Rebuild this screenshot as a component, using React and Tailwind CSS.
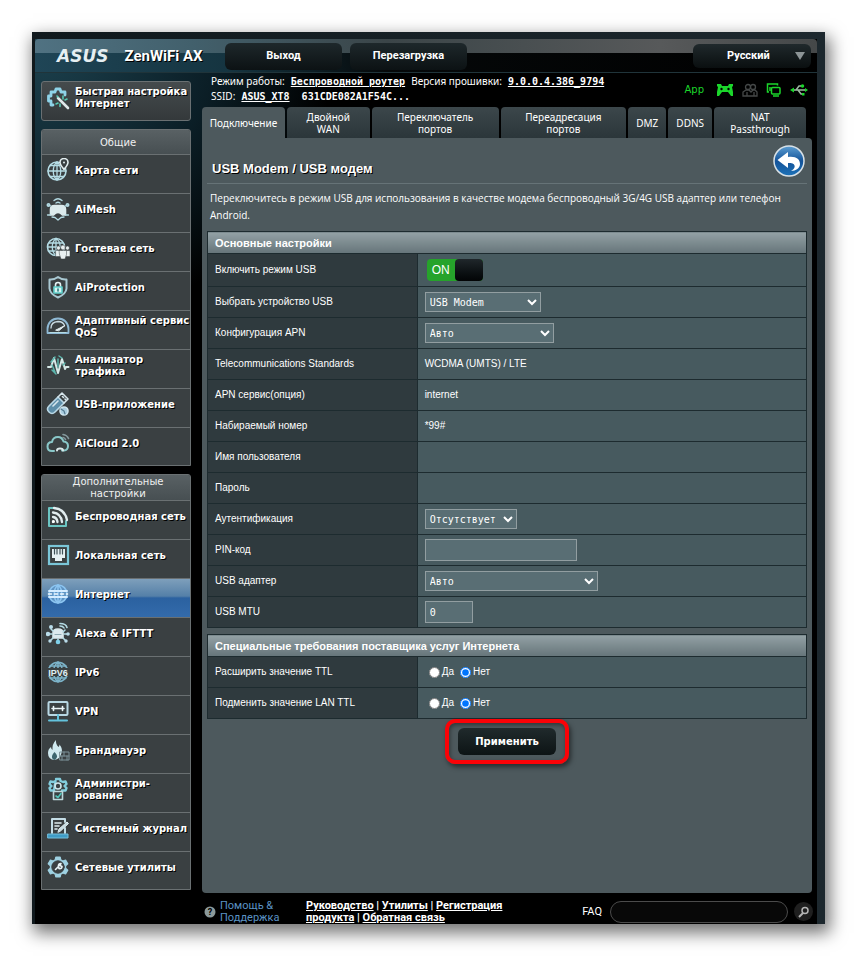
import React, { useState } from 'react';

// Icons
const Svg = ({ children, className = 'size-6' }) => (
  <svg viewBox="0 0 24 24" className={`${className} shrink-0`} fill="none" stroke="#b4dbe4" strokeWidth="1.6" strokeLinecap="round" strokeLinejoin="round" aria-hidden="true">
    {children}
  </svg>
);

const GEAR = 'M9.8 2h4.4l.6 2.9 2 1.1 2.8-1 2.2 3.8-2.2 2v2.4l2.2 2-2.2 3.8-2.8-1-2 1.1-.6 2.9H9.8l-.6-2.9-2-1.1-2.8 1-2.2-3.8 2.2-2v-2.4l-2.2-2L4.4 5l2.8 1 2-1.1z';

const icons = {
  setup: (
    <Svg>
      <path d="M7 19H5v-4H2.500v-5H5V6h4l1-3h4l1 3h4v3" stroke="#8ed3e8" strokeWidth="2.800" />
      <path d="M12 12l10 10" stroke="#dfe8ea" strokeWidth="2.600" />
      <path d="M17 10v3M21 13l-2 1M10 18l2-1M14 18v2.500M11 10l1 1" stroke="#57c9b4" />
    </Svg>
  ),
  map: (
    <Svg>
      <circle cx="11" cy="13" r="9" />
      <path d="M2 13h18M4 7.500h10M4 18.500h14M11 4c-5 4-5 14 0 18M11 4c5 4 5 14 0 18M11 4v18" strokeWidth="1.300" />
      <path d="M18 11.500c-3-4-4-5-4-7a4 4 0 0 1 8 0c0 2-1 3-4 7z" fill="#3a4042" stroke="#e2edef" />
      <circle cx="18" cy="4.500" r="1" fill="#e2edef" stroke="none" />
    </Svg>
  ),
  mesh: (
    <Svg>
      <path d="M4.500 18V12.500q0-4 4-4h7q4 0 4 4V18h-3q-4.500-5-9 0z" fill="#dcebed" stroke="#dcebed" />
      <path d="M8 3.500q4-3.500 8 0M10 6q2-1.500 4 0M2 8l3 1M22 8l-3 1M1.500 18h3M19.500 18h3M6 20l3 .5 3 2.500 3-2.500 3-.5" strokeWidth="1.300" />
      <circle cx="2.500" cy="8" r="1.200" />
      <circle cx="21.500" cy="8" r="1.200" />
    </Svg>
  ),
  guest: (
    <Svg>
      <circle cx="10" cy="11" r="8.500" />
      <path d="M2 11h13M3 7h14M3 15h9M10 2.500c-5 4-5 13 0 17M10 2.500c3 2 4 5 4 7M10 2.500v17" strokeWidth="1.300" />
      <g fill="#e8f0f1" stroke="#3a4042" strokeWidth=".5">
        <circle cx="12.500" cy="12" r="2" />
        <circle cx="21.500" cy="12" r="2" />
        <path d="M10 14.500h5v6h-5zM19 14.500h5v6h-5z" />
        <circle cx="17" cy="11.500" r="2.400" />
        <path d="M13.500 14.500h7v4l-1.500 4.500h-4l-1.500-4.500z" />
      </g>
    </Svg>
  ),
  protection: (
    <Svg>
      <path d="M12 2q4 3 8.500 2.500v9Q20 19 12 22.500 4 19 3.500 13.500v-9Q8 5 12 2z" stroke="#a9c9d3" strokeWidth="2" />
      <path d="M9.500 12v-2q0-2.500 2.500-2.500t2.500 2.500v2" stroke="#e4f3f4" />
      <path d="M8 12h8v6H8z" fill="#d7f5f3" stroke="#5fd0cb" />
      <path d="M12 14v2" stroke="#2d7a80" />
    </Svg>
  ),
  qos: (
    <Svg>
      <path d="M1.500 19v-4C1.500 9 6 4.500 12 4.500S22.500 9 22.500 15v4z" stroke="#8fb9d4" strokeWidth="1.800" />
      <path d="M5 14q0-6 7-6.500 5 0 6.500 4" stroke="#c9dbe3" strokeWidth="1.300" />
      <path d="M10 16l9-4.500-6 5z" fill="#e3eef1" stroke="#e3eef1" strokeWidth="1" />
      <path d="M4 18.500h16" strokeWidth="1" />
    </Svg>
  ),
  traffic: (
    <Svg>
      <path d="M2 14h3L8 5l4 15 4-14 3 10 1-2h2.500" stroke="#d5e8e7" strokeWidth="2" />
      <path d="M5 9l4-5M6 17l4 4M13 3l3 2M17 12l2-2M6 12l3 7M12 6v8" stroke="#5cb6ae" strokeWidth="1.500" />
    </Svg>
  ),
  usb: (
    <Svg>
      <path d="M3 14l9-9 6 6-9 9q-3 3-6 0t0-6z" fill="#5d8ea9" stroke="#b9d8e6" />
      <path d="M12 5l4-4 6 6-4 4M16.500 4.500l1 1M19 7l.5.500M7 14l5-5" stroke="#d7e6ec" />
      <circle cx="18" cy="19" r="4" fill="#a9cde0" stroke="#d0e5ee" />
      <path d="M15 17l3 2 1 3" stroke="#547b91" strokeWidth="1.200" />
    </Svg>
  ),
  cloud: (
    <Svg>
      <path d="M8 20H6q-4.500 0-4.500-4.500T6 11q1-5 6-5 4 0 5.500 4.500Q22 11 22 15t-4 4.500h-2" stroke="#8ac8c9" strokeWidth="2" />
      <path d="M11 19.500q0-2 3-2 3 0 3 2" stroke="#dbe9ea" strokeWidth="2" />
      <path d="M17 3.500q4 .5 5.500 4M17 6.500q2 .5 2.500 2" stroke="#84989d" />
    </Svg>
  ),
  wireless: (
    <Svg>
      <path d="M8 4H3v18h17v-5" stroke="#6bc4c2" strokeWidth="2" />
      <path d="M7 18v-.5M7 13q4 .5 4.500 5M7 8.500q8 1 9 9.500M8 4q11 1 13 12" stroke="#e1ecef" strokeWidth="2.300" />
      <circle cx="7.500" cy="17.500" r="1.500" fill="#fff" stroke="none" />
    </Svg>
  ),
  lan: (
    <Svg>
      <rect x="3" y="3" width="19" height="18" stroke="#7ac6d8" strokeWidth="2.200" strokeLinejoin="miter" />
      <path d="M6 6h13v9h-3v3H9v-3H6z" fill="#e5f0f3" stroke="none" />
      <path d="M8.500 6v5M11 6v5M14 6v5M16.500 6v5" stroke="#3e5158" strokeWidth="1.200" />
    </Svg>
  ),
  internet: (
    <Svg>
      <circle cx="12" cy="12" r="9" fill="#5e93c2" stroke="#8bc4f0" />
      <path d="M12 3c-5 4-5 14 0 18M12 3c5 4 5 14 0 18M12 3v18" stroke="#8bc4f0" />
      <path d="M3 9h18M3 15h18" stroke="#d4ecff" strokeWidth="2" />
      <path d="M2.500 12h19" stroke="#f4fbff" strokeDasharray="3 3" />
    </Svg>
  ),
  alexa: (
    <Svg>
      <path d="M7 17V12q0-4 5-4t5 4v5z" fill="#dce9ed" stroke="#dce9ed" />
      <path d="M3 13h3M18 13h4M12 18v3M5 8l2 2M19 9l-2 2M5 19l2-2M19 19l-2-2M14 2.500q6 0 7 4M14 5q3 0 4 2" />
      <g fill="#b9dcea" stroke="none">
        <circle cx="2" cy="13" r="2.200" />
        <circle cx="22" cy="13" r="1.800" />
        <circle cx="5" cy="6" r="2" />
        <circle cx="12" cy="21" r="2.300" fill="#7fd0ea" />
        <circle cx="4" cy="20" r="1.700" />
        <circle cx="20" cy="20" r="1.700" />
      </g>
      <path d="M9 13.500h6" stroke="#8fa9b2" strokeWidth="1.200" />
    </Svg>
  ),
  ipv6: (
    <Svg>
      <circle cx="12" cy="12" r="9.800" stroke="#7cb3c9" />
      <path d="M12 2v20M4 6h16M4 18h16M12 2c-6 5-6 15 0 20M12 2c6 5 6 15 0 20" stroke="#7cb3c9" />
      <rect x="1" y="8" width="22" height="8" fill="#3a4042" stroke="none" />
      <text x="12" y="15.500" textAnchor="middle" fontFamily="Liberation Sans, sans-serif" fontSize="9" fontWeight="bold" fill="#e0f0f5" stroke="none">IPV6</text>
    </Svg>
  ),
  vpn: (
    <Svg>
      <rect x="2.500" y="3" width="19" height="13" rx="1" stroke="#b8d7e3" strokeWidth="2" />
      <path d="M6 9.500h3.500M7.500 7.500v4M14.500 9.500H18M16.500 7.500v4M10.500 9.500h3" stroke="#e9f4f7" />
      <path d="M12 16v4M3 21.500h18" stroke="#63c2dc" strokeWidth="2" />
    </Svg>
  ),
  firewall: (
    <Svg>
      <path d="M8 22q-6-1-6-7 0-4 3-6 0 2 1.500 3Q6 6 10 2q-.5 4 2.500 7 1-1 1-2.500Q17 11 15.500 15q-1 6-7.500 7z" fill="#cfe9ef" stroke="none" />
      <path d="M8.500 22q-3-1-2.500-4 .5-2 2.500-4 3 3 2.500 5t-2.500 3z" fill="#3d666f" stroke="none" />
      <path d="M14 14h9v8h-9zM14 18h9M18 14v4M16 18v4M21 18v4" stroke="#7d9299" strokeWidth="1" />
    </Svg>
  ),
  admin: (
    <Svg>
      <path d="M10 2h4l.5 2L17 5l2.500-.5 1 2.500-2 2 2 2-1 2.500H16M8 13.500H4.500L3.500 11l2-2-2-2 1-2.500L7 5l2.500-1z" stroke="#83cddd" strokeWidth="2.400" />
      <circle cx="12" cy="9" r="3" stroke="#cfe6eb" />
      <rect x="7.500" y="14.500" width="9" height="8" stroke="#bcd8dc" />
      <path d="M10 19l2 1.500 3-4" stroke="#51c3b9" />
    </Svg>
  ),
  log: (
    <Svg>
      <path d="M6 17V3h13v3M19 12v5" stroke="#c4dde6" strokeWidth="2" />
      <path d="M9 7h6M9 10h4M9 13h2" stroke="#e0edf1" />
      <path d="M12 16l1-3 8-7 1.500 1.500-8 7.500z" fill="#c6dde4" stroke="#e0edf1" strokeWidth="1" />
      <path d="M2 18h20v4H2z" fill="#3f9cc6" stroke="#72bedb" strokeWidth="1" />
    </Svg>
  ),
  tools: (
    <Svg>
      <path d={GEAR} fill="#9ed1e2" stroke="#9ed1e2" strokeWidth="1.200" />
      <circle cx="12" cy="12" r="6.200" fill="#3a4042" stroke="#3a4042" strokeWidth="1" />
      <path d="M9.500 14.500l3-3m0 0q-.5-3 2.500-3l-1 2 2 1q0 2.500-3 2z" stroke="#e8f3f6" />
    </Svg>
  ),
};

const generalMenu = [
  { icon: 'map', label: 'Карта сети' },
  { icon: 'mesh', label: 'AiMesh' },
  { icon: 'guest', label: 'Гостевая сеть' },
  { icon: 'protection', label: 'AiProtection' },
  { icon: 'qos', label: 'Адаптивный сервис\nQoS' },
  { icon: 'traffic', label: 'Анализатор\nтрафика' },
  { icon: 'usb', label: 'USB-приложение' },
  { icon: 'cloud', label: 'AiCloud 2.0' },
];

const advancedMenu = [
  { icon: 'wireless', label: 'Беспроводная сеть' },
  { icon: 'lan', label: 'Локальная сеть' },
  { icon: 'internet', label: 'Интернет', active: true },
  { icon: 'alexa', label: 'Alexa & IFTTT' },
  { icon: 'ipv6', label: 'IPv6' },
  { icon: 'vpn', label: 'VPN' },
  { icon: 'firewall', label: 'Брандмауэр' },
  { icon: 'admin', label: 'Администри-\nрование' },
  { icon: 'log', label: 'Системный журнал' },
  { icon: 'tools', label: 'Сетевые утилиты' },
];

const tabs = [
  { label: 'Подключение', size: 'flex-[83_1_0]', active: true },
  { label: 'Двойной\nWAN', size: 'flex-[83_1_0]' },
  { label: 'Переключатель\nпортов', size: 'flex-[127_1_0]' },
  { label: 'Переадресация\nпортов', size: 'flex-[126_1_0]' },
  { label: 'DMZ', size: 'flex-[38_1_0]' },
  { label: 'DDNS', size: 'flex-[44_1_0]' },
  { label: 'NAT\nPassthrough', size: 'flex-[92_1_0]' },
];

const MenuGroup = ({ title, items }) => (
  <nav aria-label={title} className="mt-2 overflow-hidden rounded-t-[3px] border border-[#6a7072] bg-[#3a4042]">
    <h2 className="flex min-h-6 items-center justify-center bg-gradient-to-b from-[#596164] to-[#474f52] pt-px pr-5 pl-6 text-center text-[10px] leading-3 text-[#f0f0f0]">
      {title}
    </h2>
    <ul>
      {items.map((item) => (
        <li key={item.label} className="h-[39px] last:h-[38px]">
          <a
            href="#"
            className={`flex h-full gap-[5px] border-t border-[#6a7072] pl-1 ${
              item.active ? 'bg-[linear-gradient(#7e9fbb_0%,#5580a8_45%,#2b61a0_50%,#336bab_100%)]' : ''
            }`}
          >
            <span className="mt-[3px] flex">{icons[item.icon]}</span>
            <span className="flex h-8 items-center text-[10px] leading-3 font-bold whitespace-pre text-white [text-shadow:1px_1px_0_#000]">
              {item.label}
            </span>
          </a>
        </li>
      ))}
    </ul>
  </nav>
);

const Section = ({ title, children }) => (
  <table className="w-full border-collapse border border-[#1d2b2f] text-[10px] leading-3 text-white">
    <thead>
      <tr>
        <th colSpan={2} className="h-[22px] bg-gradient-to-b from-[#93a1a5] to-[#66757a] px-[7px] text-left text-[11px] font-black">
          {title}
        </th>
      </tr>
    </thead>
    <tbody>{children}</tbody>
  </table>
);

const Row = ({ label, id, tall, children }) => (
  <tr className={tall ? 'h-[33px]' : 'h-[31px]'}>
    <th className="w-[35%] border border-[#1d2b2f] bg-[#2f3a3e] p-0 pl-[7px] text-left font-normal">
      {id ? <label htmlFor={id}>{label}</label> : label}
    </th>
    <td className="border border-[#1d2b2f] bg-[#475a5f] p-0 pl-[7px]">{children}</td>
  </tr>
);

const Select = ({ id, options, width }) => (
  <select
    id={id}
    className={`block h-5 border border-[#929ea1] bg-[#596e74] font-['DejaVu_Sans_Mono',monospace] text-[10px] text-white ${width}`}
  >
    {options.map((option) => (
      <option key={option}>{option}</option>
    ))}
  </select>
);

const YesNo = ({ name, label }) => {
  const [value, setValue] = useState('Нет');
  return (
    <div role="radiogroup" aria-label={label} className="flex items-center gap-1.5 pl-1">
      {['Да', 'Нет'].map((option) => (
        <label key={option} className="flex items-center gap-0.5">
          <input
            type="radio"
            name={name}
            checked={value === option}
            onChange={() => setValue(option)}
            className="size-[11px]"
          />
          {option}
        </label>
      ))}
    </div>
  );
};

const HeaderButton = ({ children }) => (
  <button
    type="button"
    className="h-[27px] w-[117px] rounded-md bg-gradient-to-b from-[#1e282b] to-[#0c1214] font-['Roboto',sans-serif] text-[11px] font-bold text-white"
  >
    {children}
  </button>
);

const InfoLabel = ({ children }) => <span className="font-['Noto_Sans',sans-serif]">{children}</span>;

const InfoLink = ({ children }) => (
  <a href="#" className="font-bold underline">
    {children}
  </a>
);

const StatusIcons = () => (
  <div className="flex items-center gap-2 pt-2 text-[#1bd62b]">
    <span className="text-[10px]">App</span>
    <svg viewBox="0 0 18 14" className="ml-1 h-3.5 w-[18px]" fill="currentColor" aria-hidden="true">
      <path d="M1 1h4l1 2h6l1-2h4v2l-1 1 1 5v4h-2l-3-4H6l-3 4H1V9l1-5-1-1z" />
      <circle cx="5.500" cy="6" r="1.200" fill="#000" />
      <circle cx="12.500" cy="6" r="1.200" fill="#000" />
    </svg>
    <svg viewBox="0 0 16 14" className="h-3.5 w-4" fill="none" stroke="#454848" strokeWidth="1.300" aria-hidden="true">
      <circle cx="6" cy="4" r="2.500" />
      <circle cx="11" cy="4" r="2.500" />
      <path d="M1 13V9l3-2h3l2 2 2-2h2l2 2v4zM5 9v4M12 9v4" />
    </svg>
    <svg viewBox="0 0 16 14" className="h-3.5 w-4" fill="none" stroke="currentColor" strokeWidth="1.500" aria-hidden="true">
      <path d="M3 9H1.500V1h10v1.500M4 4v4" />
      <rect x="5.500" y="4.500" width="8.500" height="6.500" rx="1" />
      <path d="M7 13h6" />
    </svg>
    <svg viewBox="0 0 18 14" className="h-3.5 w-[18px]" fill="none" stroke="currentColor" strokeWidth="1.500" aria-hidden="true">
      <path d="M3 7h12M6 7l3-4h3M8 7l3 4h2" stroke="#9eb8a2" />
      <path d="M0 7l4-2.500v5zM18 7l-3-2v4z" fill="currentColor" stroke="none" />
      <circle cx="12.500" cy="3" r="1" fill="currentColor" />
      <rect x="12" y="10" width="2.500" height="2.500" fill="currentColor" stroke="none" />
    </svg>
  </div>
);

const App = () => {
  const [enabled, setEnabled] = useState(true);
  const [pin, setPin] = useState('');
  const [mtu, setMtu] = useState('0');

  return (
    <div className="bg-white p-8 font-['DejaVu_Sans',Verdana,sans-serif]">
      <div className="bg-[linear-gradient(to_right,#10191d,#1d282e)] pt-[7px] pr-2 pl-[3px] shadow-[3px_7px_16px_2px_rgba(0,0,0,0.55)]">
        <div className="bg-black bg-[radial-gradient(ellipse_300px_290px_at_top_left,#1d4350,#0b1e26_60%,transparent)] bg-no-repeat">
          {/* Header */}
          <header className="flex h-[34px] items-center rounded-t border-b border-[#20343a] bg-[linear-gradient(to_right,#507282,#42606c_20%,#3b4548_45%,#57595a_80%,#454849),linear-gradient(to_right,#1f4556,#153440_25%,#050809_45%,#000)] bg-[size:100%_14px,100%_100%] bg-no-repeat pt-px pr-1.5">
            <div className="flex w-[190px] items-center gap-4 pl-[22px]">
              <span className="text-[17px] leading-4 font-bold text-[#e6eff2] italic">ASUS</span>
              <span className="font-['Roboto',sans-serif] text-[15px] leading-5 font-bold whitespace-nowrap text-white [text-shadow:1px_1px_0_#000]">
                ZenWiFi AX
              </span>
            </div>
            <div className="flex gap-2">
              <HeaderButton>Выход</HeaderButton>
              <HeaderButton>Перезагрузка</HeaderButton>
            </div>
            <button
              type="button"
              aria-haspopup="listbox"
              className="ml-auto flex h-6 w-[118px] items-center justify-between rounded-md bg-gradient-to-b from-[#20292c] to-[#0a0f10] pr-1.5 pl-[34px] font-['Roboto',sans-serif] text-[11px] font-bold text-white"
            >
              Русский
              <svg viewBox="0 0 10 8" className="h-2 w-2.5" fill="#8c9496" aria-hidden="true">
                <path d="M0 0h10L5 8z" />
              </svg>
            </button>
          </header>

          <div className="flex gap-[11px] pr-[5px] pl-1.5">
            {/* Sidebar */}
            <aside className="w-[150px] shrink-0 pt-2 pb-[3px]">
              <a
                href="#"
                className="flex h-10 gap-[5px] rounded-[3px] border border-[#6a7072] bg-gradient-to-b from-[#454b4d] to-[#34393b] pt-1 pl-1 text-[10px] leading-3 font-bold text-white [text-shadow:1px_1px_0_#000]"
              >
                {icons.setup}
                <span className="whitespace-pre">{'Быстрая настройка\nИнтернет'}</span>
              </a>
              <MenuGroup title="Общие" items={generalMenu} />
              <MenuGroup title="Дополнительные настройки" items={advancedMenu} />
            </aside>

            {/* Content */}
            <main className="flex min-w-0 flex-1 flex-col">
              <div className="flex h-[34px] items-start justify-between pt-px pr-1 pl-[9px] text-[10px] leading-[15px] text-white">
                <p className="font-['DejaVu_Sans_Mono',monospace]">
                  <InfoLabel>Режим работы:</InfoLabel> <InfoLink>Беспроводной роутер</InfoLink>{' '}
                  <InfoLabel>Версия прошивки:</InfoLabel> <InfoLink>9.0.0.4.386_9794</InfoLink>
                  <br />
                  <InfoLabel>SSID:</InfoLabel> <InfoLink>ASUS_XT8</InfoLink>&nbsp; <b>631CDE082A1F54C...</b>
                </p>
                <StatusIcons />
              </div>

              <div role="tablist" className="flex h-[31px] gap-0.5 pr-1.5">
                {tabs.map((tab) => (
                  <button
                    key={tab.label}
                    type="button"
                    role="tab"
                    aria-selected={!!tab.active}
                    className={`min-w-0 rounded-t text-center font-['Noto_Sans',sans-serif] text-[10px] leading-3 whitespace-pre text-white ${tab.size} ${
                      tab.active ? 'bg-[#4d595d]' : 'bg-gradient-to-b from-[#3c474b] to-[#2b363a]'
                    }`}
                  >
                    {tab.label}
                  </button>
                ))}
              </div>

              <div className="flex-1 rounded-tr rounded-b bg-[#4d595d] px-[5px] pt-[7px] font-['Liberation_Sans',Arial,sans-serif]">
                <div className="flex items-end justify-between border-b border-[#667377] pr-0.5 pb-1.5 pl-[5px]">
                  <h1 className="text-[13px] leading-4 font-bold text-white [text-shadow:1px_1px_0_#000]">USB Modem / USB модем</h1>
                  <button type="button" aria-label="Назад" className="size-8">
                    <svg viewBox="0 0 32 32" className="size-8" aria-hidden="true">
                      <defs>
                        <linearGradient id="back" x1="0" y1="0" x2="0" y2="1">
                          <stop offset="0" stopColor="#5d9ed2" />
                          <stop offset=".5" stopColor="#145399" />
                          <stop offset="1" stopColor="#1d72b8" />
                        </linearGradient>
                      </defs>
                      <circle cx="16" cy="16" r="15" fill="url(#back)" stroke="#d8e1e7" strokeWidth="1.500" />
                      <path d="M4.500 15L15 7v5c8-1 12 2 12 7 0 4-4 7-9 7 3.500-2 4-4 3.500-5.500C21 18.500 19 18 15 18v5z" fill="#fff" />
                    </svg>
                  </button>
                </div>
                <p className="mt-1.5 pr-3 pb-[7px] pl-[3px] font-['Open_Sans',sans-serif] text-[10px] leading-[17px] text-white">
                  Переключитесь в режим USB для использования в качестве модема беспроводный 3G/4G USB адаптер или телефон Android.
                </p>

                <Section title="Основные настройки">
                  <Row label="Включить режим USB" tall>
                    <button
                      type="button"
                      role="switch"
                      aria-checked={enabled}
                      aria-label="Включить режим USB"
                      onClick={() => setEnabled(!enabled)}
                      className="ml-0.5 flex h-[22px] w-14 rounded bg-[#26a32b] text-xs text-white"
                    >
                      <span className="flex h-full w-7 items-center justify-center">ON</span>
                      <span className="h-full w-7 rounded bg-gradient-to-b from-[#20272b] to-[#030506]" />
                    </button>
                  </Row>
                  <Row label="Выбрать устройство USB" id="device">
                    <Select id="device" options={['USB Modem']} width="w-[116px]" />
                  </Row>
                  <Row label="Конфигурация APN" id="apn">
                    <Select id="apn" options={['Авто', 'Вручную']} width="w-[129px]" />
                  </Row>
                  <Row label="Telecommunications Standards">WCDMA (UMTS) / LTE</Row>
                  <Row label="APN сервис(опция)">internet</Row>
                  <Row label="Набираемый номер">*99#</Row>
                  <Row label="Имя пользователя" />
                  <Row label="Пароль" />
                  <Row label="Аутентификация" id="auth">
                    <Select id="auth" options={['Отсутствует']} width="w-[92px]" />
                  </Row>
                  <Row label="PIN-код" id="pin">
                    <input
                      id="pin"
                      type="text"
                      value={pin}
                      onChange={(e) => setPin(e.target.value)}
                      className="block h-[22px] w-[152px] border border-[#929ea1] bg-[#596e74] px-1"
                    />
                  </Row>
                  <Row label="USB адаптер" id="adapter">
                    <Select id="adapter" options={['Авто']} width="w-[173px]" />
                  </Row>
                  <Row label="USB MTU" id="mtu">
                    <input
                      id="mtu"
                      type="text"
                      value={mtu}
                      onChange={(e) => setMtu(e.target.value)}
                      className="block h-[22px] w-12 border border-[#929ea1] bg-[#596e74] px-1 font-['DejaVu_Sans_Mono',monospace]"
                    />
                  </Row>
                </Section>

                <div className="h-1.5" />

                <Section title="Специальные требования поставщика услуг Интернета">
                  <Row label="Расширить значение TTL">
                    <YesNo name="ttl" label="Расширить значение TTL" />
                  </Row>
                  <Row label="Подменить значение LAN TTL">
                    <YesNo name="lan-ttl" label="Подменить значение LAN TTL" />
                  </Row>
                </Section>

                <div className="mx-auto w-fit rounded-[10px] border-4 border-[#fb0207] px-[9px] py-[5px] shadow-[2px_3px_5px_rgba(0,0,0,0.5),inset_1px_2px_4px_rgba(0,0,0,0.4)]">
                  <button
                    type="button"
                    className="block h-[27px] w-[98px] rounded-md bg-gradient-to-b from-[#202a2c] to-[#0d1415] font-['DejaVu_Sans',Verdana,sans-serif] text-[10px] font-bold text-white"
                  >
                    Применить
                  </button>
                </div>
              </div>
            </main>
          </div>

          {/* Footer */}
          <footer className="flex h-[31px] items-center pt-1.5 pr-1 pl-[169px] font-['Roboto',sans-serif] text-[11px] leading-3 text-white">
            <svg viewBox="0 0 12 12" className="mr-1 size-3" aria-hidden="true">
              <circle cx="6" cy="6" r="5.500" fill="#8c9a9b" />
              <text x="6" y="9" textAnchor="middle" fontSize="9" fontWeight="bold" fill="#000">?</text>
            </svg>
            <a href="#" className="w-[86px] pr-6 text-[#5b93c4]">Помощь &amp; Поддержка</a>
            <p className="w-[208px] font-bold">
              <a href="#" className="underline">Руководство</a> | <a href="#" className="underline">Утилиты</a> |{' '}
              <a href="#" className="underline">Регистрация продукта</a> | <a href="#" className="underline">Обратная связь</a>
            </p>
            <label htmlFor="faq" className="mr-2 ml-auto">FAQ</label>
            <input id="faq" type="search" className="h-[22px] w-[178px] rounded-full border border-[#4b4b4b] bg-[#080808] px-3" />
            <button type="button" aria-label="Поиск" className="ml-1.5 flex size-[19px] items-center justify-center rounded-full bg-[#1f1f1f]">
              <svg viewBox="0 0 12 12" className="size-3" fill="none" stroke="#b5b5b5" strokeWidth="1.500" aria-hidden="true">
                <circle cx="7" cy="4.500" r="3" />
                <path d="M5 7l-4 4" strokeWidth="2" />
              </svg>
            </button>
          </footer>
        </div>
      </div>
    </div>
  );
};

export default App;
